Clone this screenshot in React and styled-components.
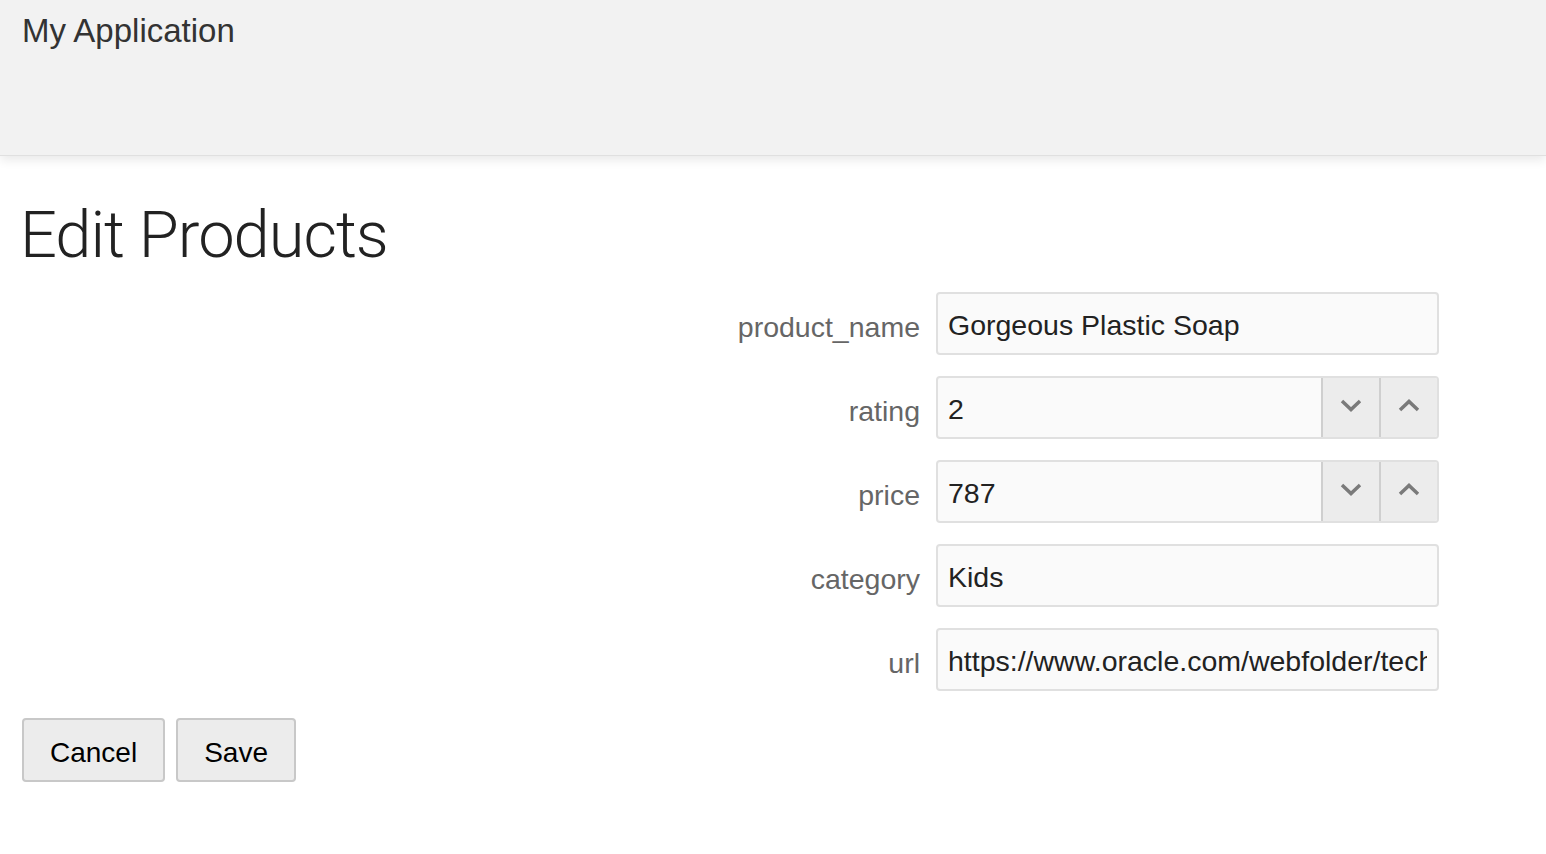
import React from "react";
import styled, { createGlobalStyle } from "styled-components";

const GlobalStyle = createGlobalStyle`
  html, body {
    margin: 0;
    padding: 0;
    background: #fff;
    font-family: "Liberation Sans", Arial, sans-serif;
  }
`;

const fields = [
  { name: "product_name", value: "Gorgeous Plastic Soap" },
  { name: "rating", value: "2", number: true },
  { name: "price", value: "787", number: true },
  { name: "category", value: "Kids" },
  { name: "url", value: "https://www.oracle.com/webfolder/technetwork/jet/images/product.png" },
];

function Chevron({ up }) {
  return (
    <svg width="22" height="13" viewBox="0 0 22 13">
      <path
        d={up ? "M2 11 L11 2.5 L20 11" : "M2 2 L11 10.5 L20 2"}
        fill="none"
        stroke="#7a7a7a"
        strokeWidth="3.5"
      />
    </svg>
  );
}

export default function App() {
  return (
    <>
      <GlobalStyle />
      <Header>
        <AppTitle>My Application</AppTitle>
      </Header>
      <Main>
        <PageTitle>Edit Products</PageTitle>
        <Form>
          {fields.map((f) => (
            <React.Fragment key={f.name}>
              <Label>{f.name}</Label>
              <Field>
                <Input readOnly value={f.value} />
                {f.number && (
                  <>
                    <StepButton>
                      <Chevron />
                    </StepButton>
                    <StepButton>
                      <Chevron up />
                    </StepButton>
                  </>
                )}
              </Field>
            </React.Fragment>
          ))}
        </Form>
        <Actions>
          <Button>Cancel</Button>
          <Button>Save</Button>
        </Actions>
      </Main>
    </>
  );
}

const Header = styled.header`
  height: 156px;
  background: #f2f2f2;
  padding: 12px 22px 0;
  box-sizing: border-box;
  border-bottom: 1px solid #e0e0e0;
  box-shadow: 0 4px 10px rgba(0, 0, 0, 0.09);
  position: relative;
`;

const AppTitle = styled.div`
  font-size: 33px;
  color: #333;
  line-height: 38px;
`;

const Main = styled.main`
  padding: 39px 22px 0;
`;

const PageTitle = styled.h1`
  margin: 0 0 0 -2px;
  font-family: Roboto, "Liberation Sans", sans-serif;
  font-weight: 300;
  font-size: 65px;
  line-height: 80px;
  color: #222;
  letter-spacing: -1px;
`;

const Form = styled.div`
  display: grid;
  grid-template-columns: 1fr 503px;
  column-gap: 16px;
  row-gap: 21px;
  margin: 17px 85px 0 0;
  align-items: center;
`;

const Label = styled.label`
  text-align: right;
  font-size: 28.5px;
  color: #666;
  padding-top: 8px;
`;

const Field = styled.div`
  display: flex;
  height: 63px;
  box-sizing: border-box;
  border: 2px solid #e0e0e0;
  border-radius: 4px;
  background: #fafafa;
  overflow: hidden;
`;

const Input = styled.input`
  flex: 1;
  min-width: 0;
  border: none;
  background: transparent;
  font-family: "Liberation Sans", Arial, sans-serif;
  font-size: 28.5px;
  color: #222;
  padding: 4px 10px 0;
  outline: none;
`;

const StepButton = styled.div`
  width: 58px;
  box-sizing: border-box;
  display: flex;
  align-items: center;
  justify-content: center;
  background: #ececec;
  border-left: 2px solid #cfcfcf;
  padding-bottom: 4px;
`;

const Actions = styled.div`
  display: flex;
  gap: 11px;
  margin-top: 27px;
`;

const Button = styled.button`
  height: 64px;
  padding: 5px 26px 0;
  background: #ececec;
  border: 2px solid #c8c8c8;
  border-radius: 4px;
  font-family: "Liberation Sans", Arial, sans-serif;
  font-size: 28px;
  color: #000;
`;
